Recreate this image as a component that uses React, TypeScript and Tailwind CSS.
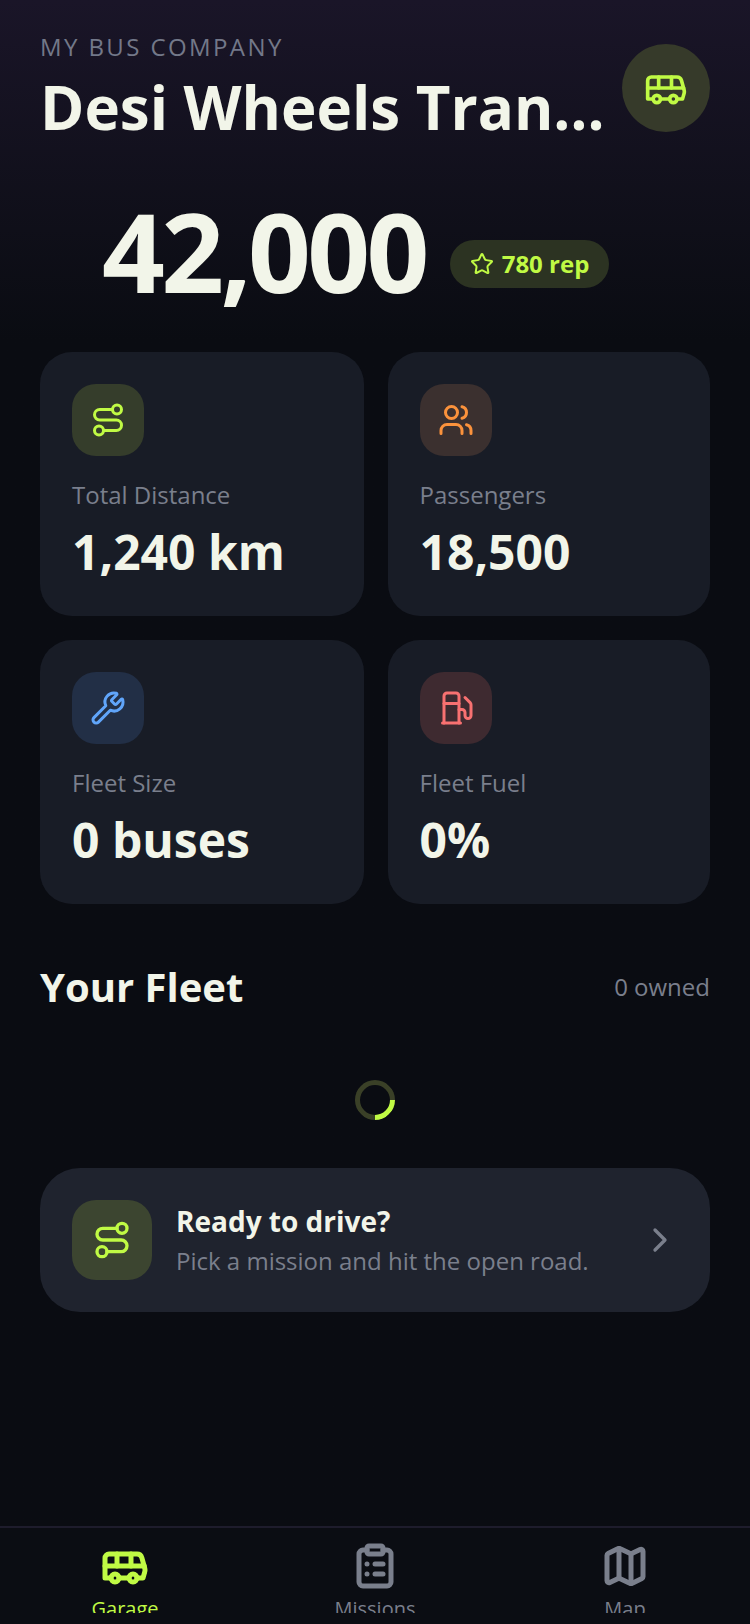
import React from "react";
import {
  Bus,
  ChevronRight,
  ClipboardList,
  Map as MapIcon,
  Route,
  Star,
  Users,
  Wrench,
} from "lucide-react";

// older lucide fuel pump, the current one in the package is shorter
const FuelPump: React.FC<{ size?: number; className?: string }> = ({ size = 24, className }) => (
  <svg
    width={size}
    height={size}
    viewBox="0 0 24 24"
    fill="none"
    stroke="currentColor"
    strokeWidth={2}
    strokeLinecap="round"
    strokeLinejoin="round"
    className={className}
  >
    <path d="M3 22h12" />
    <path d="M4 9h10" />
    <path d="M14 22V4a2 2 0 0 0-2-2H6a2 2 0 0 0-2 2v18" />
    <path d="M14 13h2a2 2 0 0 1 2 2v2a2 2 0 0 0 2 2a2 2 0 0 0 2-2V9.83a2 2 0 0 0-.59-1.42L18 5" />
  </svg>
);

const stats = [
  {
    label: "Total Distance",
    value: "1,240 km",
    icon: Route,
    box: "bg-[#353d2b]",
    color: "text-[#c0fa44]",
  },
  {
    label: "Passengers",
    value: "18,500",
    icon: Users,
    box: "bg-[#3b302f]",
    color: "text-[#fb923c]",
  },
  {
    label: "Fleet Size",
    value: "0 buses",
    icon: Wrench,
    box: "bg-[#222f46]",
    color: "text-[#60a5fa]",
  },
  {
    label: "Fleet Fuel",
    value: "0%",
    icon: FuelPump,
    box: "bg-[#3e2a30]",
    color: "text-[#f87171]",
  },
];

const tabs = [
  { label: "Garage", icon: Bus, active: true },
  { label: "Missions", icon: ClipboardList, active: false },
  { label: "Map", icon: MapIcon, active: false },
];

export default function App() {
  return (
    <div className="flex h-[1624px] w-[750px] flex-col overflow-hidden bg-[#0a0c12] font-['Open_Sans',sans-serif] text-[#f2f5e9]">
      <div className="flex-1 bg-gradient-to-b from-[#1a1528] to-[#0a0c12] to-[340px] px-10 pt-[29px]">
        {/* header */}
        <div className="flex items-start justify-between">
          <div className="w-[570px]">
            <p className="text-2xl leading-[36px] tracking-[2.4px] text-[#737889]">
              MY BUS COMPANY
            </p>
            <h1 className="mt-[6px] truncate text-[60px] leading-[72px] font-bold">
              Desi Wheels Transport
            </h1>
          </div>
          <div className="mt-[15px] flex h-[88px] w-[88px] items-center justify-center rounded-full bg-[#363a2a]">
            <Bus size={44} className="text-[#c0fa44]" strokeWidth={2} />
          </div>
        </div>

        {/* balance */}
        <div className="mt-[33px] flex items-center gap-6 pl-[62px]">
          <span className="text-[110px] leading-[148px] font-bold tracking-[-3.7px]">
            42,000
          </span>
          <div className="mt-7 flex h-12 items-center gap-2 rounded-full bg-[#2c3322] px-5 text-2xl font-bold text-[#c0fa44]">
            <Star size={24} />
            780 rep
          </div>
        </div>

        {/* stats */}
        <div className="mt-[28px] grid grid-cols-[324px_322px] gap-6">
          {stats.map((s) => (
            <div key={s.label} className="h-[264px] rounded-[32px] bg-[#181c26] p-8 even:pl-[31.5px]">
              <div className={`flex h-[72px] w-[72px] items-center justify-center rounded-3xl ${s.box}`}>
                <s.icon size={36} className={s.color} />
              </div>
              <p className="mt-[21px] text-2xl leading-9 text-[#7a7f8c]">{s.label}</p>
              <p className="mt-[9px] text-[48px] leading-[60px] font-bold">{s.value}</p>
            </div>
          ))}
        </div>

        {/* fleet */}
        <div className="mt-[53px] flex items-center justify-between">
          <h2 className="text-[40px] leading-[60px] font-bold">Your Fleet</h2>
          <span className="text-2xl text-[#7a7f8c]">0 owned</span>
        </div>

        <div className="mt-[63px] flex justify-center">
          <div className="h-10 w-10 rotate-[45deg] rounded-full border-[5px] border-[#3a4027] border-r-[#c0fa44]" />
        </div>

        {/* cta */}
        <div className="mt-[48px] flex h-[144px] items-center rounded-[40px] bg-[#1f232e] pr-[30px] pl-8">
          <div className="flex h-20 w-20 items-center justify-center rounded-3xl bg-[#3c4530]">
            <Route size={40} className="text-[#c0fa44]" />
          </div>
          <div className="ml-6 flex-1 pt-0.5">
            <p className="text-[28px] leading-9 font-bold">Ready to drive?</p>
            <p className="mt-1 text-2xl leading-9 text-[#7a7f8c]">
              Pick a mission and hit the open road.
            </p>
          </div>
          <ChevronRight size={40} className="text-[#7a7f8c]" />
        </div>
      </div>

      {/* bottom nav */}
      <div className="h-[87px] shrink-0 overflow-hidden border-t-2 border-[#1e1c2c] bg-[#0b0d13]">
        <div className="grid grid-cols-3 pt-[14px]">
          {tabs.map((t) => (
            <div
              key={t.label}
              className={`flex flex-col items-center ${t.active ? "text-[#c0fa44]" : "text-[#7a7f8c]"}`}
            >
              <t.icon size={48} strokeWidth={2.5} />
              <span className="mt-1 text-xl leading-[30px]">{t.label}</span>
            </div>
          ))}
        </div>
      </div>
      <div className="h-[11px] shrink-0 bg-[#0b0d13]" />
    </div>
  );
}
